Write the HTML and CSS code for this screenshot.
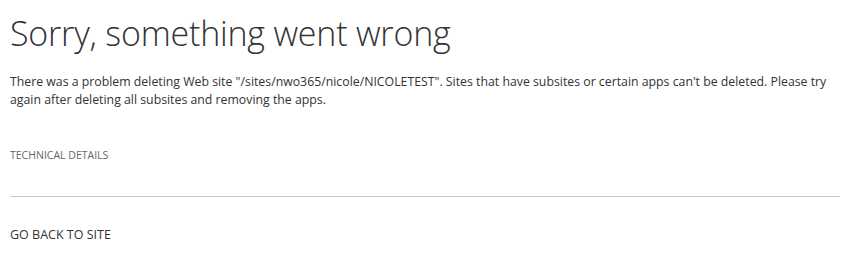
FILE: index.html
```html
<!DOCTYPE html>
<html lang="en">
<head>
    <meta charset="UTF-8">
    <meta name="viewport" content="width=device-width, initial-scale=1.0">
    <title>Error</title>
    <link rel="stylesheet" href="styles.css">
</head>
<body>

    <div id="errorPage">
        <h1 class="error-title">Sorry, something went wrong</h1>

        <p class="error-message">There was a problem deleting Web site "/sites/nwo365/nicole/NICOLETEST". Sites that have subsites or certain apps can't be deleted. Please try again after deleting all subsites and removing the apps.</p>

        <div class="tech-details">TECHNICAL DETAILS</div>

        <hr class="divider">

        <a class="back-link" href="#">GO BACK TO SITE</a>
    </div>

</body>
</html>
```

FILE: styles.css
```css
body {
    font-family: 'Open Sans', 'Liberation Sans', sans-serif;
    margin: 0;
    background-color: #fff;
    color: #333;
}

#errorPage {
    padding: 10px 9px 0 10px;
}

.error-title {
    font-size: 34px;
    font-weight: 300;
    color: #333;
    margin: 0;
    line-height: 46px;
    letter-spacing: -0.2px;
}

.error-message {
    font-size: 12.3px;
    line-height: 18px;
    margin: 17px 0 0 0;
    padding-right: 10px;
}

.tech-details {
    font-size: 10.5px;
    color: #666;
    margin-top: 39px;
    line-height: 14px;
}

.divider {
    border: none;
    border-top: 1px solid #c8c8c8;
    margin: 34px 0 0 0;
}

.back-link {
    display: block;
    margin-top: 29px;
    font-size: 12.5px;
    color: #333;
    text-decoration: none;
}
```
